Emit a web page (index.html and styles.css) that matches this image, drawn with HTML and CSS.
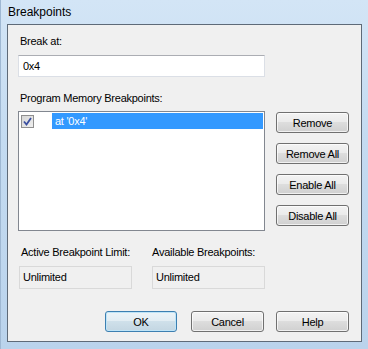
FILE: index.html
```html
<!DOCTYPE html>
<html lang="en">
<head>
  <meta charset="UTF-8" />
  <title>Breakpoints</title>
  <link rel="stylesheet" href="styles.css">
</head>
<body>

<div class="window">
  <div class="titlebar">Breakpoints</div>

  <div class="client">
    <label class="lbl" for="break_at">Break at:</label>
    <input type="text" id="break_at" class="edit" value="0x4">

    <div class="lbl lbl-list">Program Memory Breakpoints:</div>
    <div class="list-row">
      <div class="listbox">
        <div class="item">
          <span class="check"><svg width="9" height="9" viewBox="0 0 9 9"><path d="M1 4.5 L3.5 7.5 L8 1" fill="none" stroke="#3b4fa0" stroke-width="1.8"/></svg></span>
          <span class="item-text">at '0x4'</span>
        </div>
      </div>
      <div class="side-buttons">
        <button class="btn">Remove</button>
        <button class="btn">Remove All</button>
        <button class="btn">Enable All</button>
        <button class="btn">Disable All</button>
      </div>
    </div>

    <div class="info-row">
      <div class="info">
        <div class="lbl">Active Breakpoint Limit:</div>
        <div class="readonly">Unlimited</div>
      </div>
      <div class="info info-second">
        <div class="lbl">Available Breakpoints:</div>
        <div class="readonly">Unlimited</div>
      </div>
    </div>

    <div class="footer">
      <button class="btn btn-default">OK</button>
      <button class="btn btn-cancel">Cancel</button>
      <button class="btn btn-help">Help</button>
    </div>
  </div>
</div>

</body>
</html>
```

FILE: styles.css
```css
html, body {
  margin: 0;
  padding: 0;
}

body {
  font-family: "Liberation Sans", Arial, sans-serif;
  font-size: 11px;
  letter-spacing: -0.25px;
  color: #000;
  width: 368px;
  height: 349px;
  overflow: hidden;
}

.window {
  width: 368px;
  height: 349px;
  box-sizing: border-box;
  background: linear-gradient(180deg, #d3e5f6 0%, #c4dbf1 40%, #bad3ec 100%);
  border-left: 1px solid #9fb8d3;
  display: flex;
  flex-direction: column;
}

.titlebar {
  height: 24px;
  padding-left: 7px;
  font-size: 12px;
  letter-spacing: 0;
  line-height: 25px;
  color: #000;
}

.client {
  margin: 0 6px 5px 6px;
  height: 318px;
  box-sizing: border-box;
  background-color: #f0f0f0;
  border: 1px solid #5e6a78;
  padding: 10px 0 0 10px;
  display: flex;
  flex-direction: column;
}

.lbl {
  display: block;
  line-height: 13px;
  margin-left: 2px;
  white-space: nowrap;
}

.edit {
  width: 247px;
  height: 22px;
  box-sizing: border-box;
  margin: 7px 0 0 0;
  padding: 0 4px;
  border: 1px solid #dbdfe6;
  border-top-color: #abadb3;
  background: #fff;
  font-family: inherit;
  font-size: 11px;
  letter-spacing: -0.25px;
  color: #000;
}

.lbl-list {
  margin-top: 15px;
}

.list-row {
  display: flex;
  gap: 11px;
  margin-top: 6px;
}

.listbox {
  width: 247px;
  height: 120px;
  box-sizing: border-box;
  border: 1px solid #828790;
  background: #fff;
  padding: 1px 1px 0 2px;
}

.item {
  display: flex;
  align-items: center;
  height: 16px;
}

.check {
  width: 11px;
  height: 11px;
  border: 1px solid #8f8f8f;
  background: linear-gradient(135deg, #d6d6d6, #efefef);
  display: flex;
  align-items: center;
  justify-content: center;
}

.item-text {
  margin-left: 18px;
  flex: 1;
  height: 16px;
  line-height: 16px;
  padding-left: 3px;
  background-color: #3399ff;
  color: #fff;
}

.side-buttons {
  display: flex;
  flex-direction: column;
  gap: 10px;
  margin-top: 1px;
}

.btn {
  width: 73px;
  height: 21px;
  box-sizing: border-box;
  border: 1px solid #707070;
  border-radius: 3px;
  background: linear-gradient(180deg, #f3f3f3 0%, #ebebeb 45%, #dddddd 50%, #d0d0d0 100%);
  box-shadow: inset 0 0 0 1px rgba(255, 255, 255, 0.7);
  font-family: inherit;
  font-size: 11px;
  letter-spacing: -0.25px;
  color: #000;
  padding: 0;
}

.info-row {
  display: flex;
  margin-top: 15px;
}

.info {
  width: 113px;
  margin-left: 1px;
}

.info-second {
  margin-left: 20px;
}

.info-second .lbl {
  margin-left: 0;
}

.readonly {
  margin-top: 7px;
  height: 23px;
  box-sizing: border-box;
  border: 1px solid #d9d9d9;
  background: #f0f0f0;
  line-height: 21px;
  padding-left: 3px;
  color: #000;
}

.footer {
  display: flex;
  margin-top: 22px;
  padding-left: 87px;
}

.btn-default {
  width: 72px;
  border-color: #3c7fb1;
  box-shadow: inset 0 0 0 1px #bfe4f7;
  background: linear-gradient(180deg, #edf4f8 0%, #e2edf3 45%, #cfe0ea 50%, #c3d6e2 100%);
}

.btn-cancel {
  margin-left: 14px;
}

.btn-help {
  margin-left: 12px;
}
```
